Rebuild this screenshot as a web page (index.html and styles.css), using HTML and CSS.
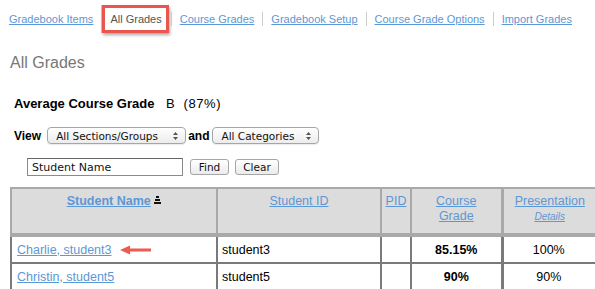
FILE: index.html
```html
<!DOCTYPE html>
<html lang="en">
<head>
    <meta charset="UTF-8">
    <title>All Grades</title>
    <link rel="stylesheet" href="styles.css">
</head>
<body>
    <nav class="tabs">
        <a href="#">Gradebook Items</a>
        <span class="tab-current"><span class="highlight">All Grades</span></span>
        <a href="#">Course Grades</a>
        <a href="#">Gradebook Setup</a>
        <a href="#">Course Grade Options</a>
        <a href="#">Import Grades</a>
    </nav>

    <div class="content">
        <h1>All Grades</h1>

        <div class="summary">
            <span class="summary-label">Average Course Grade</span>
            <span class="summary-value">B (87%)</span>
        </div>

        <div class="filters">
            <label>View</label>
            <span class="select-wrap sections">
                <select><option>All Sections/Groups</option></select>
                <svg class="arrows" width="5" height="8" viewBox="0 0 5 8"><path d="M2.5 0L5 3H0z M2.5 8L0 5h5z" fill="#555"/></svg>
            </span>
            <label>and</label>
            <span class="select-wrap categories">
                <select><option>All Categories</option></select>
                <svg class="arrows" width="5" height="8" viewBox="0 0 5 8"><path d="M2.5 0L5 3H0z M2.5 8L0 5h5z" fill="#555"/></svg>
            </span>
        </div>

        <div class="search">
            <input type="text" value="Student Name">
            <button class="btn-find">Find</button>
            <button class="btn-clear">Clear</button>
        </div>

        <table class="grades">
            <colgroup>
                <col class="c-name">
                <col class="c-id">
                <col class="c-pid">
                <col class="c-grade">
                <col class="c-pres">
            </colgroup>
            <thead>
                <tr>
                    <th><a href="#" class="bold">Student Name</a> <svg class="sort" width="7" height="8" viewBox="0 0 7 8"><rect x="2" y="0" width="3" height="2" fill="#111"/><rect x="1" y="3" width="5" height="2" fill="#111"/><rect x="0" y="6" width="7" height="2" fill="#111"/></svg></th>
                    <th><a href="#">Student ID</a></th>
                    <th class="pid"><a href="#">PID</a></th>
                    <th><a href="#">Course<br>Grade</a></th>
                    <th class="pres"><a href="#">Presentation</a><br><a href="#" class="details">Details</a></th>
                </tr>
            </thead>
            <tbody>
                <tr>
                    <td class="name"><a href="#">Charlie, student3</a><svg class="pointer" width="32" height="10" viewBox="0 0 32 10"><path d="M0 5L10 0.5V3.6H31V6.4H10V9.5z" fill="#ec5b50"/></svg></td>
                    <td>student3</td>
                    <td></td>
                    <td class="num strong">85.15%</td>
                    <td class="num pres">100%</td>
                </tr>
                <tr>
                    <td class="name"><a href="#">Christin, student5</a></td>
                    <td>student5</td>
                    <td></td>
                    <td class="num strong">90%</td>
                    <td class="num pres">90%</td>
                </tr>
            </tbody>
        </table>
    </div>
</body>
</html>
```

FILE: styles.css
```css
body {
    margin: 0;
    font-family: "Liberation Sans", Arial, sans-serif;
    color: #000;
    background: #fff;
    overflow: hidden;
}
a {
    color: #5c97d6;
}
.tabs {
    display: flex;
    align-items: center;
    padding: 5px 0 0 1px;
    font-size: 11px;
    line-height: 14px;
}
.tabs > * {
    padding: 0 8px;
    border-left: 1px solid #ccc;
}
.tabs > :first-child {
    border-left: none;
}
.tabs .tab-current {
    padding: 0 2px 0 0;
}
.highlight {
    display: inline-block;
    padding: 4px 4px 4px 5px;
    border: 3px solid #e9564e;
    box-shadow: 1px 2px 3px rgba(0, 0, 0, 0.35);
    color: #555;
}
.content {
    padding-left: 10px;
}
h1 {
    margin: 20px 0 0 0;
    font-size: 16px;
    line-height: 19px;
    font-weight: normal;
    color: #777;
}
.summary {
    display: flex;
    margin-top: 24px;
    padding-left: 4px;
    font-size: 13px;
    line-height: 16px;
}
.summary-label {
    font-weight: bold;
    width: 152px;
}
.summary-value {
    word-spacing: 4px;
    letter-spacing: 0.6px;
}
.filters {
    display: flex;
    align-items: center;
    margin-top: 15px;
    padding-left: 4px;
    font-size: 12px;
    font-weight: bold;
}
.filters label {
    margin-right: 6px;
}
.filters .select-wrap + label {
    margin: 0 3px 0 2px;
}
.select-wrap {
    position: relative;
    display: inline-block;
}
.select-wrap select {
    appearance: none;
    -webkit-appearance: none;
    height: 17px;
    padding: 0 0 0 8px;
    border: 1px solid #a6a6a6;
    border-radius: 4px;
    background: linear-gradient(#fff, #ececec);
    font-family: "DejaVu Sans", sans-serif;
    font-size: 10.5px;
    color: #111;
    box-shadow: 0 1px 1px rgba(0, 0, 0, 0.08);
}
.sections select {
    width: 139px;
}
.categories select {
    width: 107px;
}
.select-wrap .arrows {
    position: absolute;
    right: 8px;
    top: 5px;
}
.search {
    display: flex;
    align-items: center;
    margin-top: 14px;
    padding-left: 17px;
}
.search input {
    box-sizing: border-box;
    width: 156px;
    height: 18px;
    margin: 0 7px 0 0;
    padding: 0 4px;
    border: 1px solid #8a8a8a;
    border-top-color: #666;
    font-family: "DejaVu Sans", sans-serif;
    font-size: 11px;
    color: #111;
}
.search button {
    box-sizing: border-box;
    height: 16px;
    padding: 0;
    margin-right: 6px;
    border: 1px solid #a6a6a6;
    border-radius: 3px;
    background: linear-gradient(#fff, #ebebeb);
    font-family: "DejaVu Sans", sans-serif;
    font-size: 10.5px;
    color: #111;
}
.btn-find {
    width: 39px;
}
.btn-clear {
    width: 44px;
}
.grades {
    margin-top: 11px;
    border-collapse: collapse;
    table-layout: fixed;
    width: 592px;
    font-size: 12.5px;
}
.c-name { width: 206px; }
.c-id { width: 164px; }
.c-pid { width: 30px; }
.c-grade { width: 91px; }
.c-pres { width: 101px; }
.grades th {
    height: 47px;
    padding: 5px 2px 0;
    vertical-align: top;
    background: #dcdcdc;
    border: 2px solid #a9a9a9;
    border-bottom-width: 4px;
    font-weight: normal;
    line-height: 14.5px;
    text-align: center;
    box-sizing: border-box;
}
.grades th.pres,
.grades td.pres {
    border-left-width: 3px;
}
.grades th.pres {
    padding-right: 8px;
}
.grades td.pres {
    padding-right: 12px;
}
.grades th .bold {
    font-weight: bold;
}
.grades .sort {
    vertical-align: 1px;
}
.grades .details {
    font-size: 10px;
    font-style: italic;
}
.grades td {
    height: 28px;
    padding: 0 4px;
    border: 2px solid #7a7a7a;
    border-top: none;
    box-sizing: border-box;
}
.grades td.name {
    padding-left: 5px;
}
.grades .pointer {
    margin-left: 8px;
    vertical-align: -1px;
}
.grades td.num {
    text-align: center;
}
.grades td.strong {
    font-weight: bold;
}
.grades tbody tr + tr td {
    border-top: 2px solid #7a7a7a;
}
```
